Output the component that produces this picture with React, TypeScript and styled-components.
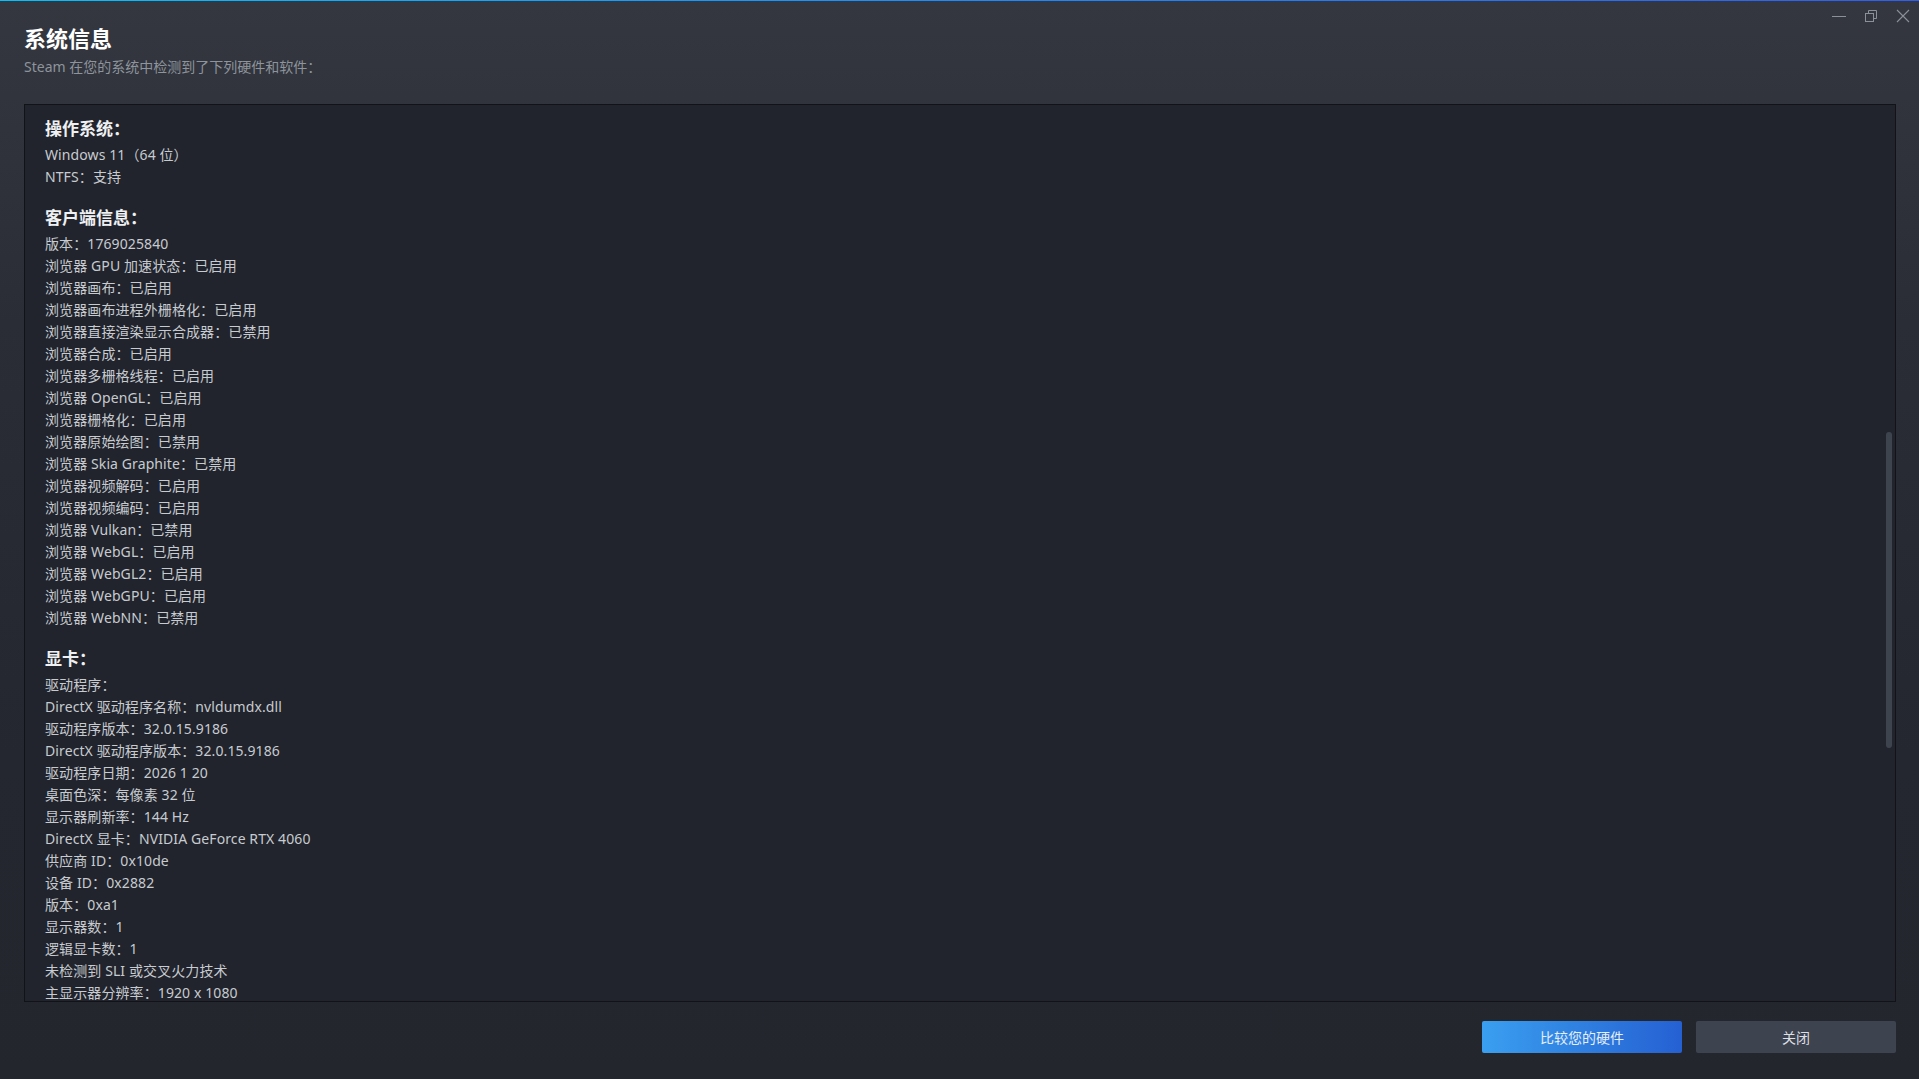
import React from "react";
import styled, { createGlobalStyle } from "styled-components";

const GlobalStyle = createGlobalStyle`
  html, body {
    margin: 0;
    padding: 0;
    height: 100%;
    background: #23262e;
  }
  #root {
    height: 100%;
  }
  * {
    box-sizing: border-box;
  }
`;

type Section = {
  title: string;
  rows: string[];
};

const sections: Section[] = [
  {
    title: "操作系统：",
    rows: ["Windows 11（64 位）", "NTFS：支持"],
  },
  {
    title: "客户端信息：",
    rows: [
      "版本：1769025840",
      "浏览器 GPU 加速状态：已启用",
      "浏览器画布：已启用",
      "浏览器画布进程外栅格化：已启用",
      "浏览器直接渲染显示合成器：已禁用",
      "浏览器合成：已启用",
      "浏览器多栅格线程：已启用",
      "浏览器 OpenGL：已启用",
      "浏览器栅格化：已启用",
      "浏览器原始绘图：已禁用",
      "浏览器 Skia Graphite：已禁用",
      "浏览器视频解码：已启用",
      "浏览器视频编码：已启用",
      "浏览器 Vulkan：已禁用",
      "浏览器 WebGL：已启用",
      "浏览器 WebGL2：已启用",
      "浏览器 WebGPU：已启用",
      "浏览器 WebNN：已禁用",
    ],
  },
  {
    title: "显卡：",
    rows: [
      "驱动程序：",
      "DirectX 驱动程序名称：nvldumdx.dll",
      "驱动程序版本：32.0.15.9186",
      "DirectX 驱动程序版本：32.0.15.9186",
      "驱动程序日期：2026 1 20",
      "桌面色深：每像素 32 位",
      "显示器刷新率：144 Hz",
      "DirectX 显卡：NVIDIA GeForce RTX 4060",
      "供应商 ID：0x10de",
      "设备 ID：0x2882",
      "版本：0xa1",
      "显示器数：1",
      "逻辑显卡数：1",
      "未检测到 SLI 或交叉火力技术",
      "主显示器分辨率：1920 x 1080",
    ],
  },
];

export default function App() {
  return (
    <>
      <GlobalStyle />
      <Window>
        <AccentLine />
        <TitleBar>
          <WinButton aria-label="最小化">
            <svg width="14" height="14" viewBox="0 0 14 14">
              <line x1="0" y1="7.5" x2="14" y2="7.5" stroke="currentColor" strokeWidth="1" />
            </svg>
          </WinButton>
          <WinButton aria-label="还原">
            <svg width="14" height="14" viewBox="0 0 14 14">
              <rect x="1.5" y="4.5" width="8" height="8" fill="none" stroke="currentColor" strokeWidth="1" />
              <path d="M4.5 4.5V1.5h8v8h-3" fill="none" stroke="currentColor" strokeWidth="1" />
            </svg>
          </WinButton>
          <WinButton aria-label="关闭">
            <svg width="14" height="14" viewBox="0 0 14 14">
              <path d="M1 1L13 13M13 1L1 13" stroke="currentColor" strokeWidth="1.1" />
            </svg>
          </WinButton>
        </TitleBar>
        <Header>
          <Title>系统信息</Title>
          <Subtitle>Steam 在您的系统中检测到了下列硬件和软件：</Subtitle>
        </Header>
        <Panel>
          <PanelContent>
            {sections.map((s, i) => (
              <SectionBlock key={s.title} first={i === 0}>
                <SectionTitle>{s.title}</SectionTitle>
                {s.rows.map((r) => (
                  <Row key={r}>{r}</Row>
                ))}
              </SectionBlock>
            ))}
          </PanelContent>
          <ScrollThumb />
        </Panel>
        <Footer>
          <Button variant="primary">比较您的硬件</Button>
          <Button variant="secondary">关闭</Button>
        </Footer>
      </Window>
    </>
  );
}

const Window = styled.div`
  height: 100%;
  display: flex;
  flex-direction: column;
  background: linear-gradient(180deg, #34373f 0%, #2a2d35 30%, #24272f 70%, #23262d 100%);
  font-family: "Noto Sans", "Noto Sans CJK SC", sans-serif;
  color: #c7cbd0;
  overflow: hidden;
`;

const AccentLine = styled.div`
  height: 1px;
  flex-shrink: 0;
  background: linear-gradient(90deg, #00c3ff 0%, #1a8cff 50%, #2f5ff0 100%);
`;

const TitleBar = styled.div`
  height: 23px;
  flex-shrink: 0;
  display: flex;
  justify-content: flex-end;
  align-items: flex-start;
`;

const WinButton = styled.div`
  width: 32px;
  height: 30px;
  display: flex;
  align-items: center;
  justify-content: center;
  color: #8b9199;
`;

const Header = styled.div`
  padding: 0 24px 27px;
  flex-shrink: 0;
`;

const Title = styled.div`
  font-size: 22px;
  line-height: 28px;
  font-weight: 700;
  color: #ffffff;
  margin-bottom: 5px;
`;

const Subtitle = styled.div`
  font-size: 14px;
  line-height: 20px;
  color: #8d949c;
`;

const Panel = styled.div`
  position: relative;
  flex: 1;
  min-height: 0;
  margin: 0 23px 0 24px;
  background: #21242c;
  border: 1px solid #111318;
  overflow: hidden;
`;

const PanelContent = styled.div`
  padding: 11px 20px 0;
`;

const SectionBlock = styled.div<{ first?: boolean }>`
  margin-top: ${(p) => (p.first ? "0" : "17px")};
`;

const SectionTitle = styled.div`
  font-size: 17px;
  line-height: 26px;
  font-weight: 700;
  color: #eef0f2;
  margin-bottom: 2px;
`;

const Row = styled.div`
  font-size: 14px;
  line-height: 22px;
  color: #c7cbd0;
  white-space: pre;
  letter-spacing: 0.1px;
`;

const ScrollThumb = styled.div`
  position: absolute;
  right: 3px;
  top: 327px;
  width: 6px;
  height: 316px;
  border-radius: 3px;
  background: #3e444e;
`;

const Footer = styled.div`
  flex-shrink: 0;
  display: flex;
  justify-content: flex-end;
  gap: 14px;
  padding: 19px 23px 26px 0;
`;

const Button = styled.div<{ variant: "primary" | "secondary" }>`
  width: 200px;
  height: 32px;
  border-radius: 2px;
  display: flex;
  align-items: center;
  justify-content: center;
  font-size: 14px;
  color: ${(p) => (p.variant === "primary" ? "#e6eef8" : "#dcdfe3")};
  background: ${(p) =>
    p.variant === "primary"
      ? "linear-gradient(90deg, #3a9ff0 0%, #2f7fe0 50%, #2560d3 100%)"
      : "#3d4450"};
`;
